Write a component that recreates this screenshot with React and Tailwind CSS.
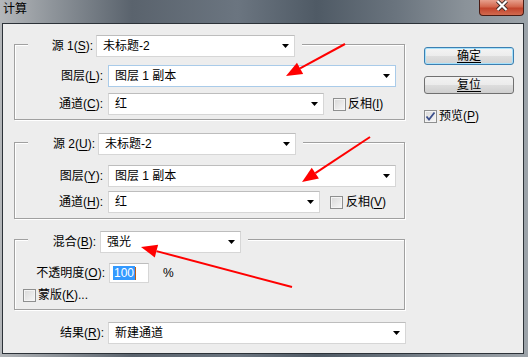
import React from 'react';

const Acc = ({ children }) => <span className="underline underline-offset-[2px]">{children}</span>;

const Arrow = () => (
  <svg width="7" height="4" viewBox="0 0 7 4" className="shrink-0">
    <path d="M0 0 H7 L3.5 4 Z" fill="#000" />
  </svg>
);

const Combo = ({ w, text, blue }) => (
  <div
    className={`h-[22px] bg-white border flex items-center justify-between pl-[6px] pr-[5px] shrink-0 ${
      blue ? 'border-[#a9cbe9]' : 'border-[#d6d6d6] border-t-[#bdbdbd]'
    }`}
    style={{ width: w }}
  >
    <span className="whitespace-pre">{text}</span>
    <Arrow />
  </div>
);

const Check = ({ checked }) => (
  <div className="w-[13px] h-[13px] border border-[#8e8f8f] bg-[linear-gradient(135deg,#d8d8d8,#f7f7f7)] shadow-[inset_0_0_0_1px_#f4f4f4] shrink-0 flex items-center justify-center">
    {checked && (
      <svg width="11" height="11" viewBox="0 0 11 11">
        <path d="M1.5 5.5 L4 8.5 L9.5 1.5" stroke="#3b4f8c" strokeWidth="1.8" fill="none" />
      </svg>
    )}
  </div>
);

const Row = ({ label, children }) => (
  <div className="h-[22px] flex items-center">
    <div className="w-[88px] text-right whitespace-nowrap">{label}</div>
    <div className="ml-[5px] flex items-center">{children}</div>
  </div>
);

const arrowShape = (x1, y1, x2, y2) => {
  const dx = x2 - x1;
  const dy = y2 - y1;
  const len = Math.hypot(dx, dy);
  const ux = dx / len;
  const uy = dy / len;
  const bx = x2 - ux * 16;
  const by = y2 - uy * 16;
  const px = -uy * 6.5;
  const py = ux * 6.5;
  return {
    line: { x1, y1, x2: bx, y2: by },
    points: `${x2},${y2} ${bx + px},${by + py} ${bx - px},${by - py}`,
  };
};

const arrows = [
  arrowShape(345, 44, 286, 76),
  arrowShape(370, 137, 302, 182),
  arrowShape(292, 287, 141, 247),
];

export default function App() {
  return (
    <div className="relative w-[528px] h-[357px] overflow-hidden font-['Liberation_Sans','Noto_Sans_CJK_SC',sans-serif] text-[12px] leading-[14px] text-black bg-[linear-gradient(90deg,#b4b7ba_0%,#8e949a_10%,#5a636d_25%,#6b7580_45%,#4f5a65_60%,#6a747e_75%,#8a9299_88%,#9ca3a9_100%)]">
      {/* title bar */}
      <div className="h-[23px] flex justify-between">
        <div className="pl-[3px] pt-[2px] text-[12px]">计算</div>
        <div className="mr-[4px] w-[45px] h-[16px] rounded-b-[4px] border border-t-0 border-[#4a1c14] bg-[linear-gradient(180deg,#e7a08d_0%,#d3664d_45%,#c2442c_55%,#d26a4f_100%)] flex items-start justify-center">
          <svg width="14" height="11" viewBox="0 0 14 11">
            <path d="M2.5 1 L11.5 10 M11.5 1 L2.5 10" stroke="#3a2a28" strokeWidth="4" />
            <path d="M2.5 1 L11.5 10 M11.5 1 L2.5 10" stroke="#fff" strokeWidth="2.2" />
          </svg>
        </div>
      </div>

      {/* dialog body */}
      <div className="ml-[2px] w-[522px] h-[331px] border border-[#2c3238] bg-[#ededed] flex">
        <div className="pl-[11px] pt-[7px]">
          {/* group 1 */}
          <fieldset className="w-[391px] border border-[#a0a0a0] shadow-[1px_1px_0_#fff,inset_1px_1px_0_#fff]">
            <legend className="ml-[13px] pt-[4px] pr-[7px] flex items-center bg-[#ededed]">
              <div className="w-[65px] text-right whitespace-nowrap">源 1(<Acc>S</Acc>):</div>
              <div className="ml-[3px]"><Combo w={199} text="未标题-2" /></div>
            </legend>
            <div className="pt-[8px] pb-[4px] flex flex-col gap-[6px]">
              <Row label={<>图层(<Acc>L</Acc>):</>}>
                <Combo w={288} text="图层 1 副本" blue />
              </Row>
              <Row label={<>通道(<Acc>C</Acc>):</>}>
                <Combo w={216} text="红" />
                <div className="ml-[9px]"><Check /></div>
                <span className="ml-[2px]">反相(<Acc>I</Acc>)</span>
              </Row>
            </div>
          </fieldset>

          {/* group 2 */}
          <fieldset className="mt-[9px] w-[391px] border border-[#a0a0a0] shadow-[1px_1px_0_#fff,inset_1px_1px_0_#fff]">
            <legend className="ml-[13px] pt-[4px] pr-[7px] flex items-center bg-[#ededed]">
              <div className="w-[67px] text-right whitespace-nowrap">源 2(<Acc>U</Acc>):</div>
              <div className="ml-[3px]"><Combo w={198} text="未标题-2" /></div>
            </legend>
            <div className="pt-[10px] pb-[5px] flex flex-col gap-[4px]">
              <Row label={<>图层(<Acc>Y</Acc>):</>}>
                <Combo w={288} text="图层 1 副本" />
              </Row>
              <Row label={<>通道(<Acc>H</Acc>):</>}>
                <Combo w={212} text="红" />
                <div className="ml-[10px]"><Check /></div>
                <span className="ml-[3px]">反相(<Acc>V</Acc>)</span>
              </Row>
            </div>
          </fieldset>

          {/* group 3 */}
          <fieldset className="mt-[6px] w-[391px] border border-[#a0a0a0] shadow-[1px_1px_0_#fff,inset_1px_1px_0_#fff]">
            <legend className="ml-[13px] pt-[6px] pr-[7px] flex items-center bg-[#ededed]">
              <div className="w-[68px] text-right whitespace-nowrap">混合(<Acc>B</Acc>):</div>
              <div className="ml-[4px]"><Combo w={141} text="强光" /></div>
            </legend>
            <div className="pt-[10px] pb-[6px]">
              <div className="h-[20px] flex items-center">
                <div className="w-[90px] text-right whitespace-nowrap">不透明度(<Acc>O</Acc>):</div>
                <div className="ml-[4px] w-[40px] h-[20px] bg-white border border-[#d6d6d6] border-t-[#bdbdbd] flex items-center pl-[3px]">
                  <span className="bg-[#3399ff] text-white px-[1px]">100</span>
                  <span className="w-[1px] h-[13px] bg-[#c05a10]" />
                </div>
                <span className="ml-[14px]">%</span>
              </div>
              <div className="mt-[4px] h-[16px] flex items-center pl-[8px]">
                <Check />
                <span className="ml-[2px]">蒙版(<Acc>K</Acc>)...</span>
              </div>
            </div>
          </fieldset>

          {/* result */}
          <div className="mt-[12px] h-[22px] flex items-center">
            <div className="w-[90px] text-right whitespace-nowrap">结果(<Acc>R</Acc>):</div>
            <div className="ml-[4px]"><Combo w={298} text="新建通道" /></div>
          </div>
        </div>

        {/* buttons */}
        <div className="ml-[18px] pt-[23px] flex flex-col">
          <button className="w-[90px] h-[18px] rounded-[3px] border border-[#3c7fb1] shadow-[inset_0_0_0_1px_#a6e1fb] bg-[linear-gradient(180deg,#f4f4f4_0%,#ececec_50%,#dedede_51%,#d2d2d2_100%)] flex items-center justify-center">
            <span className="underline underline-offset-[2px]">确定</span>
          </button>
          <button className="mt-[11px] w-[90px] h-[18px] rounded-[3px] border border-[#707070] bg-[linear-gradient(180deg,#f2f2f2_0%,#ebebeb_50%,#dddddd_51%,#cfcfcf_100%)] flex items-center justify-center">
            <span className="underline underline-offset-[2px]">复位</span>
          </button>
          <div className="mt-[15px] flex items-center">
            <Check checked />
            <span className="ml-[2px]">预览(<Acc>P</Acc>)</span>
          </div>
        </div>
      </div>

      {/* red annotation arrows */}
      <svg className="absolute inset-0 pointer-events-none" width="528" height="357">
        {arrows.map((a, i) => (
          <g key={i}>
            <line {...a.line} stroke="#ff0000" strokeWidth="2" />
            <polygon points={a.points} fill="#ff0000" />
          </g>
        ))}
      </svg>
    </div>
  );
}
